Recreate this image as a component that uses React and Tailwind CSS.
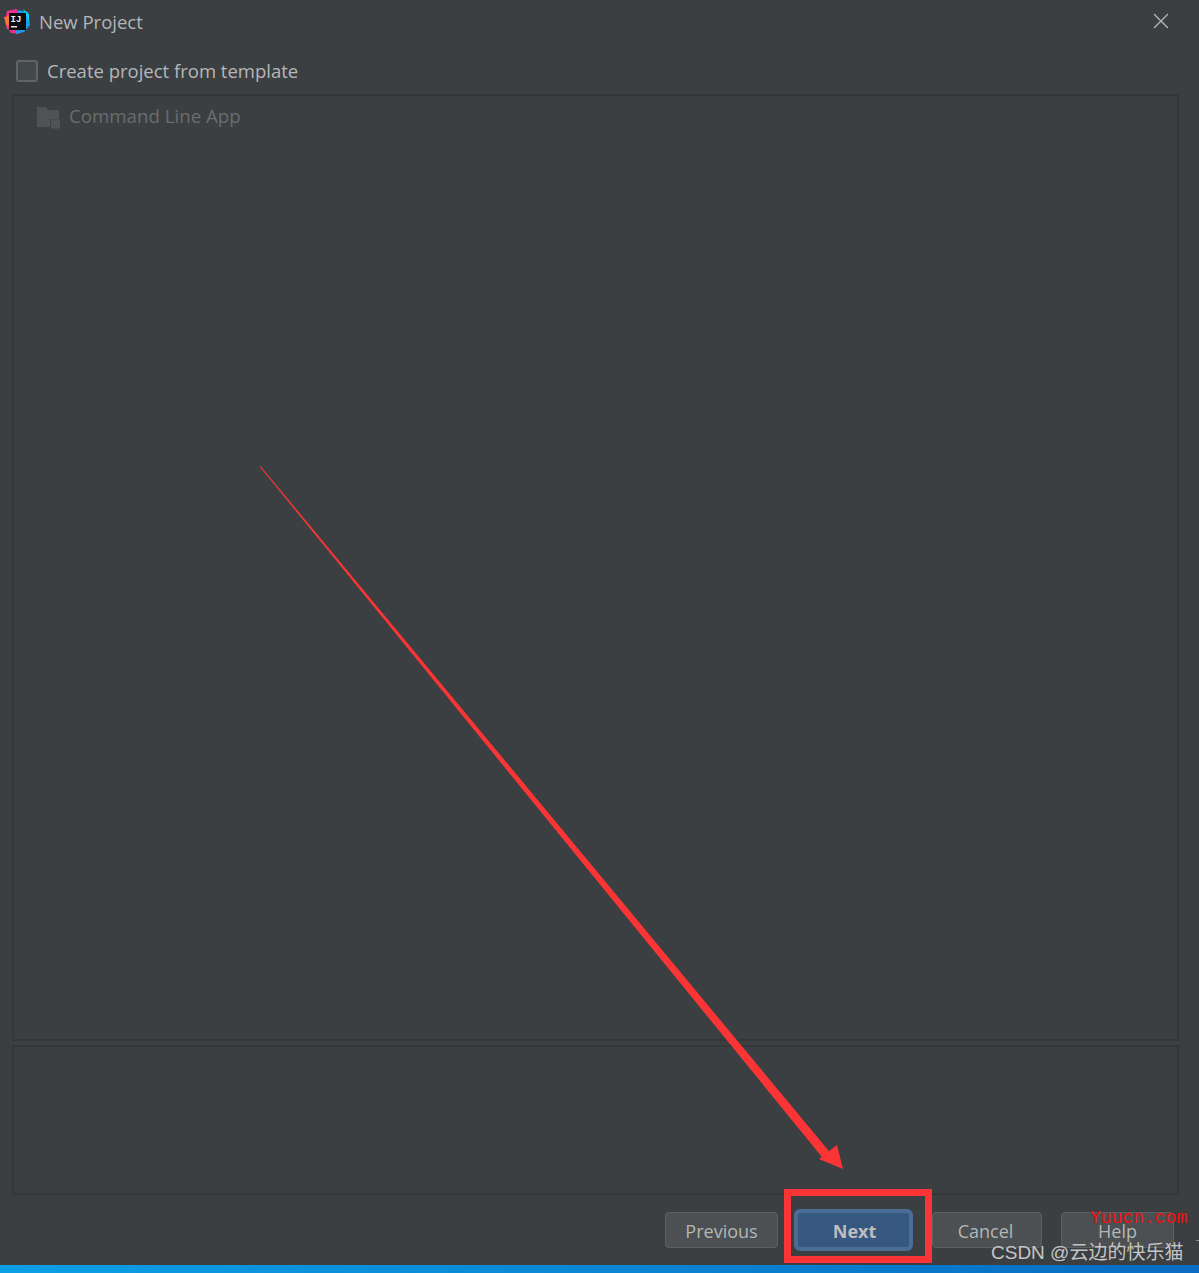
import { X } from 'lucide-react'

const uiFont = { fontFamily: '"Open Sans", "Noto Sans", sans-serif' }

// logo do IntelliJ, desenhado à mão
function IdeaLogo() {
  return (
    <svg width="26" height="26" viewBox="0 0 26 26" className="shrink-0">
      <polygon points="3,2 13,0 15,8 1,13" fill="#fc2f8f" />
      <polygon points="0,8 5,7 8,21 3,20" fill="#f9733c" />
      <polygon points="2,17 15,14 15,25 7,24" fill="#f02e8e" />
      <polygon points="14,1 24,3 26,16 20,23 12,25" fill="#1a9be8" />
      <polygon points="19,0 25,5 25,14" fill="#14c9ee" />
      <rect x="5" y="4" width="17" height="17" fill="#0c0c0e" />
      <text x="6.5" y="12.5" fontSize="9" fontWeight="700" fill="#f2f2f2" fontFamily='"Liberation Mono", monospace'>IJ</text>
      <rect x="7" y="17" width="6" height="1.5" fill="#e8e8e8" />
    </svg>
  )
}

function FolderIcon() {
  return (
    <svg width="24" height="22" viewBox="0 0 24 22" className="shrink-0">
      <path d="M0 0h9l2 3h11v9h-9v8H0z" fill="#505254" />
      <rect x="14" y="12.5" width="9" height="9" fill="#505254" />
    </svg>
  )
}

function DialogButton({ label, className }) {
  return (
    <button className={`h-[36px] rounded-[4px] border border-[#5e6060] bg-[#4c5052] pt-[2px] text-[18px] text-[#b4b6b7] ${className}`}>
      {label}
    </button>
  )
}

export default function App() {
  return (
    <div className="relative flex h-[1273px] w-[1199px] flex-col overflow-hidden bg-[#3c3f41]" style={uiFont}>
      {/* barra de título */}
      <div className="flex h-[44px] shrink-0 items-center pl-[4px] pr-[25px]">
        <IdeaLogo />
        <span className="ml-[9px] text-[18.5px] text-[#b3b5b6]">New Project</span>
        <X className="ml-auto -mt-[2px] text-[#b0b2b3]" size={26} strokeWidth={1.3} />
      </div>

      {/* checkbox */}
      <div className="flex h-[50px] shrink-0 items-start pl-[16px] pt-[16px]">
        <div className="h-[22px] w-[22px] rounded-[3px] border-2 border-[#616365] bg-[#43484a]" />
        <span className="ml-[9px] -mt-[2px] text-[18.5px] leading-[25px] text-[#b5b7b8]">Create project from template</span>
      </div>

      {/* lista de templates */}
      <div className="ml-[12px] mr-[20px] h-[947px] shrink-0 border-2 border-[#343638] pl-[23px] pt-[11px]">
        <div className="flex items-start gap-[8px]">
          <FolderIcon />
          <span className="-mt-[2px] text-[18.7px] leading-[21px] text-[#6a6c6e]">Command Line App</span>
        </div>
      </div>

      {/* descrição */}
      <div className="ml-[12px] mr-[20px] mt-[4px] h-[150px] shrink-0 border-2 border-[#343638]" />

      {/* botões */}
      <div className="flex shrink-0 pl-[665px] pt-[17px]">
        <DialogButton label="Previous" className="w-[113px]" />
        <button className="ml-[16px] -mt-[3px] h-[42px] w-[119px] rounded-[6px] border-[4px] border-[#4a6d96] bg-[#365880] pl-[2px] pt-[2px] text-[18px] font-bold text-[#bbbdbe]">
          Next
        </button>
        <DialogButton label="Cancel" className="ml-[19px] w-[110px] pr-[3px]" />
        <DialogButton label="Help" className="ml-[19px] w-[113px]" />
      </div>

      {/* barra de tarefas do windows, cortada */}
      <div className="mt-auto h-[8px] shrink-0 bg-gradient-to-r from-[#0d9fe4] via-[#0a86d4] to-[#0a6cc0]" />

      {/* anotações por cima do screenshot */}
      <svg width="1199" height="1273" viewBox="0 0 1199 1273" className="pointer-events-none absolute inset-0">
        <polygon points="260.5,466 833,1156 826,1162 260,467" fill="#fb3535" />
        <polygon points="843,1169 819,1159 837,1145" fill="#fb3535" />
      </svg>
      <div className="pointer-events-none absolute left-[784px] top-[1189px] h-[74px] w-[148px] border-[7px] border-[#fb3535]" />
      <div className="absolute left-[1196px] top-[1240px] h-[1px] w-[3px] bg-[#8a8c8d]" />
      <span className="absolute left-[1090px] top-[1208px] text-[18px] leading-[20px] text-[#f40f0f]" style={{ fontFamily: '"Liberation Mono", monospace' }}>Yuucn.com</span>
      <span className="absolute left-[991px] top-[1241px] text-[19px] leading-[24px] text-[#c4c5c6]" style={{ fontFamily: '"Liberation Sans", "Noto Sans CJK SC", sans-serif' }}>CSDN @云边的快乐猫</span>
    </div>
  )
}
